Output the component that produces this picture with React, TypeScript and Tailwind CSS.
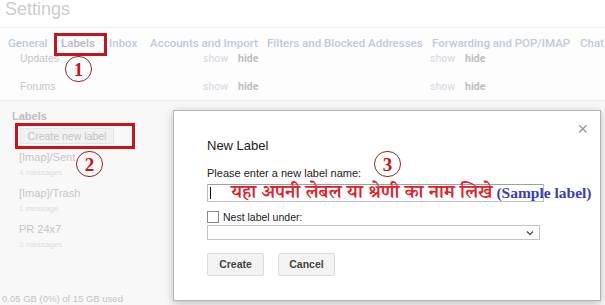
import React from "react";

function Circle({ n, className }: { n: string; className: string }) {
  return (
    <div
      className={
        "absolute w-[27px] h-[26px] rounded-full border border-[#8a2a2a] flex items-center justify-center text-[19px] font-bold text-[#c4161c] leading-none " +
        className
      }
      style={{ fontFamily: '"Liberation Serif", "DejaVu Serif", serif' }}
    >
      {n}
    </div>
  );
}

export default function App() {
  const tabs: [string, string][] = [
    ["General", "w-[53px]"],
    ["Labels", "w-[48px]"],
    ["Inbox", "w-[41px]"],
    ["Accounts and Import", "w-[117px]"],
    ["Filters and Blocked Addresses", "w-[165px]"],
    ["Forwarding and POP/IMAP", "w-[148px]"],
    ["Chat", "w-[40px]"],
  ];
  return (
    <div
      className="relative w-[605px] h-[305px] overflow-hidden bg-[#f8f8f8]"
      style={{ fontFamily: '"Liberation Sans", Arial, sans-serif' }}
    >
      {/* background page */}
      <div className="flex flex-col">
        <div className="h-[28px] bg-white border-b border-[#f0f0f0] pl-[5px] text-[18px] leading-[18px] text-[#cdcdcd]">
          Settings
        </div>
        <div className="bg-[#fdfdfd] flex flex-col border-b border-[#ececec]">
          <div
            className="flex pl-[8px] pt-[8px] h-[16px] text-[11.5px] leading-[14px] font-medium text-[#bfcadb] whitespace-nowrap"
            style={{ fontFamily: 'Roboto, "Liberation Sans", sans-serif' }}
          >
            {tabs.map(([t, w]) => (
              <span key={t} className={"shrink-0 " + w + (t === "Labels" ? " text-[#b8b8b8]" : "")}>
                {t}
              </span>
            ))}
          </div>
          {["Updates", "Forums"].map((r) => (
            <div key={r} className="flex items-center h-[28px] pt-[2px] text-[10.5px] text-[#c6c6c6]">
              <span className="pl-[20px] w-[203px]">{r}</span>
              <span
                className="flex w-[227px] gap-[10px]"
                style={{ fontFamily: 'Roboto, "Liberation Sans", sans-serif' }}
              >
                <span className="text-[#d3d8e2]">show</span>
                <span className="font-bold text-[#bdbdbd]">hide</span>
              </span>
              <span
                className="flex gap-[10px]"
                style={{ fontFamily: 'Roboto, "Liberation Sans", sans-serif' }}
              >
                <span className="text-[#d3d8e2]">show</span>
                <span className="font-bold text-[#bdbdbd]">hide</span>
              </span>
            </div>
          ))}
        </div>
        <div className="flex flex-col pl-[12px] pt-[8px]">
          <div className="text-[11px] font-bold text-[#bdbdbd] leading-[14px]">Labels</div>
          <div className="ml-[8px] mt-[5px] w-[94px] h-[16px] bg-[#f1f1f1] border border-[#e6e6e6] text-[10.5px] leading-[14px] text-[#c3c3c3] text-center">
            Create new label
          </div>
          {[
            ["[Imap]/Sent", "4 messages"],
            ["[Imap]/Trash", "1 message"],
            ["PR 24x7", "3 messages"],
          ].map(([a, b]) => (
            <div key={a} className="pl-[7px] mt-[6px] flex flex-col">
              <span className="text-[11px] leading-[15px] text-[#c6c6c6]">{a}</span>
              <span className="text-[8px] leading-[14px] mt-[1px] text-[#dcdcdc]">{b}</span>
            </div>
          ))}
        </div>
        <div className="pl-[2px] mt-[40px] text-[9.5px] leading-[14px] text-[#c4c4c4]">0.05 GB (0%) of 15 GB used</div>
      </div>

      {/* annotations on page */}
      <div className="absolute left-[54px] top-[33px] w-[53px] h-[23px] border-[3px] border-[#c4161c]" />
      <Circle n="1" className="left-[65px] top-[56px]" />
      <div className="absolute left-[15px] top-[123px] w-[120px] h-[26px] border-[3px] border-[#c4161c]" />
      <Circle n="2" className="left-[76px] top-[151px]" />

      {/* dialog */}
      <div className="absolute left-[173px] top-[110px] w-[428px] h-[191px] bg-white border border-[#b5b5b5] shadow-[0_2px_8px_rgba(0,0,0,0.25)]">
        <div className="relative flex flex-col pl-[33px] pt-[27px] text-[#222]">
          <span className="absolute right-[12px] top-[9px] text-[18px] leading-[18px] text-[#9a9a9a]">×</span>
          <div className="text-[13px] leading-[16px]">New Label</div>
          <div className="mt-[12px] text-[11px] leading-[14px]">Please enter a new label name:</div>
          <div className="relative mt-[4px] w-[337px] h-[18px] border border-[#c0c0c0] border-t-[#a0a0a0]">
            <span className="absolute left-[2px] top-[2px] w-px h-[12px] bg-black" />
            <div className="absolute left-[23px] top-[-4px] flex items-baseline whitespace-nowrap">
              <span
                className="text-[19px] leading-[24px] font-semibold text-[#e0202a]"
                style={{ fontFamily: '"Noto Serif Devanagari", "Lohit Devanagari", "FreeSerif", "Noto Sans Devanagari", serif' }}
              >
                यहा अपनी लेबल या श्रेणी का नाम लिखे
              </span>
              <span
                className="ml-[4px] text-[15.5px] font-bold text-[#3a3fb0]"
                style={{ fontFamily: '"Liberation Serif", serif' }}
              >
                (Sample label)
              </span>
            </div>
          </div>
          <div className="mt-[8px] flex items-center gap-[4px] text-[10.5px] leading-[14px]">
            <span className="w-[12px] h-[12px] border border-[#8a8a8a] bg-white" />
            <span>Nest label under:</span>
          </div>
          <div className="mt-[1px] w-[333px] h-[15px] border border-[#c4c4c4] flex items-center justify-end pr-[5px]">
            <svg width="8" height="6" viewBox="0 0 8 6">
              <path d="M1 1.5 L4 4.5 L7 1.5" fill="none" stroke="#555" strokeWidth="1.4" />
            </svg>
          </div>
          <div className="mt-[13px] flex gap-[14px]">
            <div className="w-[57px] h-[23px] bg-[#f3f3f3] border border-[#dcdcdc] rounded-[2px] flex items-center justify-center text-[10.5px] font-bold text-[#444]">
              Create
            </div>
            <div className="w-[57px] h-[23px] bg-[#f3f3f3] border border-[#dcdcdc] rounded-[2px] flex items-center justify-center text-[10.5px] font-bold text-[#444]">
              Cancel
            </div>
          </div>
        </div>
        <Circle n="3" className="left-[200px] top-[40px]" />
      </div>
    </div>
  );
}
